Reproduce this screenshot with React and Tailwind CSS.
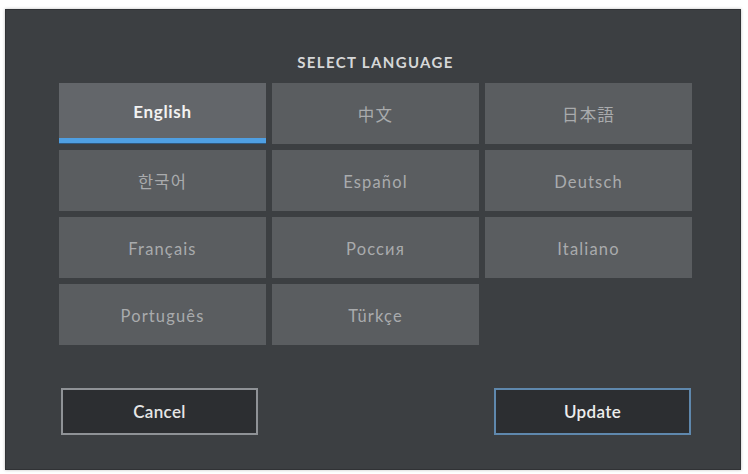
import React, { useState } from 'react';

const languages = [
  'English',
  '中文',
  '日本語',
  '한국어',
  'Español',
  'Deutsch',
  'Français',
  'Россия',
  'Italiano',
  'Português',
  'Türkçe',
];

function App() {
  const [selected, setSelected] = useState('English');

  return (
    <div className="w-[748px] h-[474px] bg-white pt-[9px] pl-[5px] font-['Lato','Noto_Sans_CJK_KR','Noto_Sans_CJK_JP',sans-serif]">
      {/* Dialog panel */}
      <div className="w-[736px] h-[461px] bg-[#3c3f42] border border-[#303235] shadow-[0_0_3px_rgba(0,0,0,0.25)] pt-[44px] pl-[53px] pr-[48px] flex flex-col">
        <h1 className="text-center text-[15px] leading-4 font-bold tracking-[0.09em] text-[#d6d7d8]">
          SELECT LANGUAGE
        </h1>

        {/* Language grid */}
        <div className="mt-[13px] grid grid-cols-[207px_207px_207px] gap-x-[6px] gap-y-[6px]">
          {languages.map((lang) => {
            const active = lang === selected;
            return (
              <button
                key={lang}
                onClick={() => setSelected(lang)}
                className={
                  active
                    ? 'relative h-[61px] bg-[#63666a] text-[17px] font-bold text-[#f2f2f2] tracking-[0.04em] pb-[4px]'
                    : 'h-[61px] bg-[#5a5d60] text-[16.5px] text-[#a9abad] tracking-[0.07em] pt-[3px]'
                }
              >
                {lang}
                {active && (
                  <span className="absolute left-0 right-0 bottom-0 h-[6px] bg-[#4f9fe2] border-b border-[#2f5a82]" />
                )}
              </button>
            );
          })}
        </div>

        {/* Actions */}
        <div className="mt-[43px] flex justify-between pl-[2px] pr-[1px]">
          <button className="w-[197px] h-[47px] bg-[#2c2e31] border-2 border-[#8f9296] text-[17px] font-semibold text-[#e6e6e6] tracking-[0.02em]">
            Cancel
          </button>
          <button className="w-[197px] h-[47px] bg-[#2c2e31] border-2 border-[#5f88ad] text-[17px] font-semibold text-[#ededed] tracking-[0.02em]">
            Update
          </button>
        </div>
      </div>
    </div>
  );
}

export default App;
